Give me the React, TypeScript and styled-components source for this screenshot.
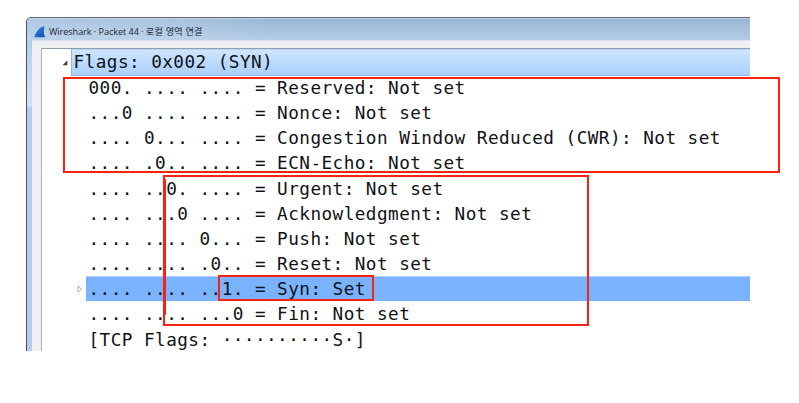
import React from 'react';
import styled, { createGlobalStyle } from 'styled-components';

const GlobalStyle = createGlobalStyle`
  body { margin: 0; background: #fff; }
  * { box-sizing: border-box; }
`;

const Page = styled.main`
  position: relative;
  width: 799px;
  height: 403px;
  padding: 17px 0 0 26px;
  overflow: hidden;
  background: #fff;
`;

const Window = styled.section`
  display: flex;
  flex-direction: column;
  width: 724px;
  height: 334px;
  overflow: hidden;
  border-top: 1px solid #5d6772;
  border-left: 1px solid #47515d;
  border-top-left-radius: 5px;
  background: linear-gradient(#a9c4e1 0, #bcd4ee 40px, #cfe1f5 88px, #b4cdee 89px);
`;

const TitleBar = styled.header`
  display: flex;
  flex: none;
  align-items: center;
  gap: 3px;
  height: 22px;
  padding: 4px 0 0 7px;
  border-top: 1px solid #c4d6e9;
  background: linear-gradient(90deg, #c4d8ec88 0, #c4d8ec66 150px, transparent 250px),
    linear-gradient(#98b5d5, #b4cde8);
`;

const Title = styled.h1`
  margin: 0;
  font: 400 9.1px/14px 'Open Sans', 'Noto Sans CJK KR', sans-serif;
  letter-spacing: -0.05px;
  color: #1d2732;
  white-space: pre;
`;

const LocalName = styled.span`
  letter-spacing: 0.25px;
`;

const Frame = styled.div`
  flex: 1;
  margin-left: 5px;
  padding: 7px 0 0 9px;
  border-top: 1px solid #d4e2f1;
  background: #f0f0f4;
`;

const Tree = styled.div`
  display: grid;
  grid-template-rows: 26px repeat(11, 25.17px);
  height: 303px;
  border-top: 1px solid #8f9eae;
  border-left: 1px solid #adb0b6;
  overflow: hidden;
  background: #fff;
`;

const Row = styled.div<{ $root?: boolean }>`
  display: grid;
  grid-template-columns: ${(p) => (p.$root ? '29px' : '44px')} 1fr;
`;

const Toggle = styled.span`
  display: flex;
  align-items: center;
  justify-content: flex-end;
  padding-right: 3px;
`;

const Line = styled.div<{ $tone?: 'root' | 'selected' }>`
  padding-left: ${(p) => (p.$tone === 'root' ? 1.5 : 2.5)}px;
  font: 400 17.7px/26px 'DejaVu Sans Mono', 'Liberation Mono', monospace;
  letter-spacing: 0.445px;
  color: #101216;
  white-space: pre;
  ${(p) =>
    p.$tone === 'root' &&
    `background: linear-gradient(#cde5ff, #aacfff);
     border: 1px solid #8fb9df; border-top-color: #b8d7f3;
     border-right: 0; line-height: 25px;`}
  ${(p) => p.$tone === 'selected' && 'background: #7ab3fd; border-top: 1px solid #add1ff; line-height: 24px;'}
`;

const Outline = styled.div<{ $x: number; $y: number; $w: number; $h: number }>`
  position: absolute;
  left: ${(p) => p.$x}px;
  top: ${(p) => p.$y}px;
  width: ${(p) => p.$w}px;
  height: ${(p) => p.$h}px;
  border: 2px solid #f5230f;
`;

const HeavyEdge = styled.i`
  position: absolute;
  left: -2px;
  top: 2px;
  width: 3px;
  height: 136px;
  background: #f5230f;
`;

const fields = [
  '000. .... .... = Reserved: Not set',
  '...0 .... .... = Nonce: Not set',
  '.... 0... .... = Congestion Window Reduced (CWR): Not set',
  '.... .0.. .... = ECN-Echo: Not set',
  '.... ..0. .... = Urgent: Not set',
  '.... ...0 .... = Acknowledgment: Not set',
  '.... .... 0... = Push: Not set',
  '.... .... .0.. = Reset: Not set',
  '.... .... ..1. = Syn: Set',
  '.... .... ...0 = Fin: Not set',
  '[TCP Flags: ··········S·]',
];

const SELECTED = 8;

const Fin = () => (
  <svg width="12" height="12" viewBox="0 0 12 12">
    <defs>
      <linearGradient id="fin" x1="0" y1="0" x2="1" y2="1">
        <stop offset="0" stopColor="#3a8be8" />
        <stop offset="1" stopColor="#0a4db4" />
      </linearGradient>
    </defs>
    <path d="M.3 11.3C2.2 5.5 5 1 10.6.2 9.4 4 9.7 8 11 11.3Z" fill="url(#fin)" />
  </svg>
);

const Expanded = () => (
  <svg width="6" height="6" viewBox="0 0 6 6">
    <path d="M5.3.5V5.2H.5Z" fill="#3c3c3c" />
  </svg>
);

const Collapsed = () => (
  <svg width="6" height="8" viewBox="0 0 6 8">
    <path d="M1 1 4.7 4 1 7Z" fill="#fff" stroke="#a5a5a5" strokeWidth=".9" />
  </svg>
);

export default function App() {
  return (
    <Page>
      <GlobalStyle />
      <Window>
        <TitleBar>
          <Fin />
          <Title>
            Wireshark · Packet 44 · <LocalName>로컬 영역 연결</LocalName>
          </Title>
        </TitleBar>
        <Frame>
          <Tree>
            <Row $root>
              <Toggle><Expanded /></Toggle>
              <Line $tone="root">Flags: 0x002 (SYN)</Line>
            </Row>
            {fields.map((text, i) => (
              <Row key={text}>
                <Toggle>{i === SELECTED && <Collapsed />}</Toggle>
                <Line $tone={i === SELECTED ? 'selected' : undefined}>{text}</Line>
              </Row>
            ))}
          </Tree>
        </Frame>
      </Window>
      <Outline $x={63} $y={77} $w={717} $h={96} />
      <Outline $x={163} $y={175} $w={426} $h={151}>
        <HeavyEdge />
      </Outline>
      <Outline $x={218} $y={275} $w={156} $h={26} />
    </Page>
  );
}
